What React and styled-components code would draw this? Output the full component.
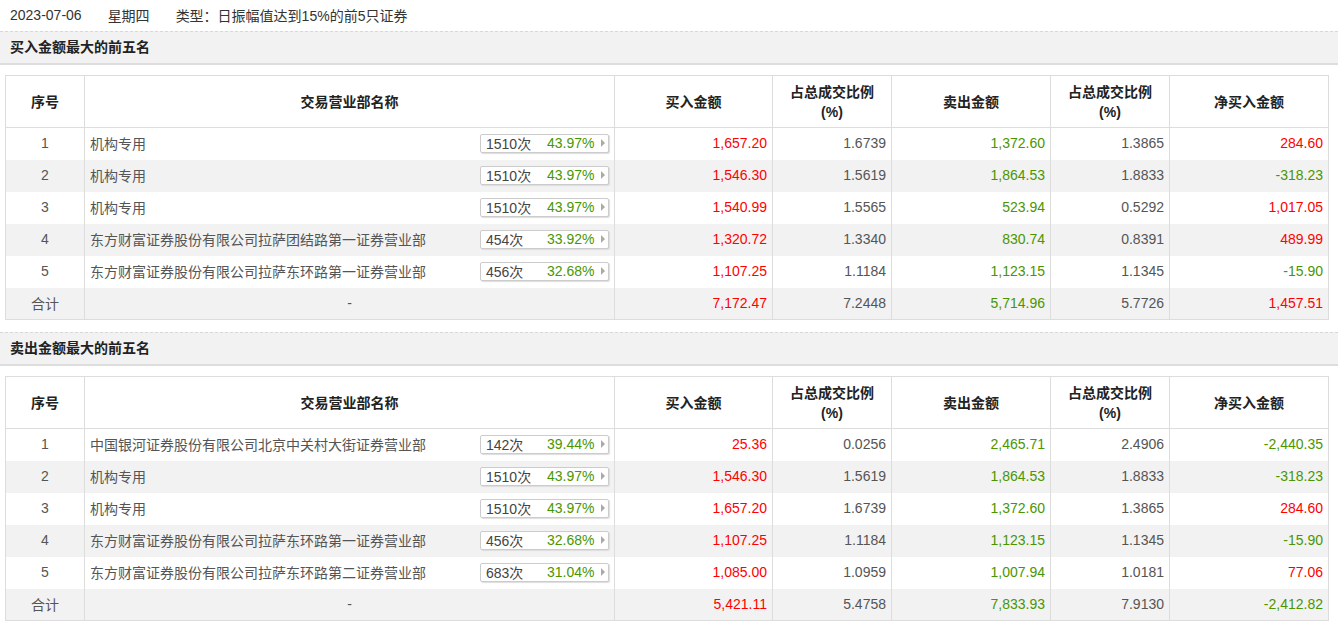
import React from 'react';
import styled, { createGlobalStyle } from 'styled-components';

const GlobalStyle = createGlobalStyle`
  body {
    margin: 0;
    background: #ffffff;
    font-family: 'Liberation Sans', Arial, 'Noto Sans CJK SC', sans-serif;
    font-size: 14px;
    color: #333;
  }
`;

const Page = styled.div`
  width: 1338px;
`;

const InfoBar = styled.div`
  display: flex;
  height: 31px;
  align-items: center;
  padding: 0 0 2px 10px;
  box-sizing: border-box;
  gap: 26px;
  color: #333;
`;

const SectionBar = styled.div`
  height: 31px;
  line-height: 31px;
  background: #f2f2f2;
  border-top: 1px dashed #d8d8d8;
  border-bottom: 2px solid #dddddd;
  padding-left: 10px;
  font-weight: bold;
  color: #222;
`;

const Table = styled.table`
  border-collapse: collapse;
  table-layout: fixed;
  width: 1323px;
  margin: 10px 0 12px 5px;
`;

const Th = styled.th`
  height: 51px;
  padding: 0;
  border: 1px solid #dddddd;
  font-weight: bold;
  color: #222;
  line-height: 20px;
  text-align: center;
`;

const Tr = styled.tr`
  background: ${(p) => (p.$alt ? '#f2f2f2' : '#ffffff')};
`;

const Td = styled.td`
  height: ${(p) => (p.$last ? '29px' : '30px')};
  border-left: 1px solid #dddddd;
  border-right: 1px solid #dddddd;
  border-bottom: ${(p) => (p.$last ? '1px solid #dddddd' : 'none')};
  text-align: ${(p) => p.$align || 'right'};
  padding: 0 5px 2px;
  color: ${(p) => p.$color || '#555'};
  white-space: nowrap;
`;

const NameWrap = styled.div`
  display: flex;
  align-items: center;
  justify-content: space-between;
`;

const Badge = styled.span`
  display: inline-flex;
  align-items: center;
  width: 122px;
  height: 17px;
  border: 1px solid #cccccc;
  border-radius: 2px;
  box-shadow: 1px 1px 1px #dddddd;
  background: #fff;
  padding-left: 5px;
  box-sizing: content-box;
`;

const Count = styled.span`
  width: 61px;
  color: #444;
`;

const Pct = styled.span`
  width: 54px;
  color: #4a9600;
`;

const Arrow = styled.span`
  width: 0;
  height: 0;
  border-top: 4px solid transparent;
  border-bottom: 4px solid transparent;
  border-left: 4px solid #aaaaaa;
`;

const RED = '#ff0000';
const GREEN = '#4a9600';

const netColor = (v) => (v.startsWith('-') ? GREEN : RED);

const buyRows = [
  ['1', '机构专用', '1510次', '43.97%', '1,657.20', '1.6739', '1,372.60', '1.3865', '284.60'],
  ['2', '机构专用', '1510次', '43.97%', '1,546.30', '1.5619', '1,864.53', '1.8833', '-318.23'],
  ['3', '机构专用', '1510次', '43.97%', '1,540.99', '1.5565', '523.94', '0.5292', '1,017.05'],
  ['4', '东方财富证券股份有限公司拉萨团结路第一证券营业部', '454次', '33.92%', '1,320.72', '1.3340', '830.74', '0.8391', '489.99'],
  ['5', '东方财富证券股份有限公司拉萨东环路第一证券营业部', '456次', '32.68%', '1,107.25', '1.1184', '1,123.15', '1.1345', '-15.90'],
];
const buyTotal = ['7,172.47', '7.2448', '5,714.96', '5.7726', '1,457.51'];

const sellRows = [
  ['1', '中国银河证券股份有限公司北京中关村大街证券营业部', '142次', '39.44%', '25.36', '0.0256', '2,465.71', '2.4906', '-2,440.35'],
  ['2', '机构专用', '1510次', '43.97%', '1,546.30', '1.5619', '1,864.53', '1.8833', '-318.23'],
  ['3', '机构专用', '1510次', '43.97%', '1,657.20', '1.6739', '1,372.60', '1.3865', '284.60'],
  ['4', '东方财富证券股份有限公司拉萨东环路第一证券营业部', '456次', '32.68%', '1,107.25', '1.1184', '1,123.15', '1.1345', '-15.90'],
  ['5', '东方财富证券股份有限公司拉萨东环路第二证券营业部', '683次', '31.04%', '1,085.00', '1.0959', '1,007.94', '1.0181', '77.06'],
];
const sellTotal = ['5,421.11', '5.4758', '7,833.93', '7.9130', '-2,412.82'];

const RankTable = ({ rows, total }) => (
  <Table>
    <colgroup>
      <col style={{ width: 79 }} />
      <col style={{ width: 530 }} />
      <col style={{ width: 158 }} />
      <col style={{ width: 119 }} />
      <col style={{ width: 159 }} />
      <col style={{ width: 119 }} />
      <col style={{ width: 159 }} />
    </colgroup>
    <thead>
      <tr>
        <Th>序号</Th>
        <Th>交易营业部名称</Th>
        <Th>买入金额</Th>
        <Th>占总成交比例<br />(%)</Th>
        <Th>卖出金额</Th>
        <Th>占总成交比例<br />(%)</Th>
        <Th>净买入金额</Th>
      </tr>
    </thead>
    <tbody>
      {rows.map((r, i) => (
        <Tr key={r[0]} $alt={i % 2 === 1}>
          <Td $align="center">{r[0]}</Td>
          <Td $align="left">
            <NameWrap>
              <span>{r[1]}</span>
              <Badge>
                <Count>{r[2]}</Count>
                <Pct>{r[3]}</Pct>
                <Arrow />
              </Badge>
            </NameWrap>
          </Td>
          <Td $color={RED}>{r[4]}</Td>
          <Td>{r[5]}</Td>
          <Td $color={GREEN}>{r[6]}</Td>
          <Td>{r[7]}</Td>
          <Td $color={netColor(r[8])}>{r[8]}</Td>
        </Tr>
      ))}
      <Tr $alt>
        <Td $align="center" $last>合计</Td>
        <Td $align="center" $last>-</Td>
        <Td $color={RED} $last>{total[0]}</Td>
        <Td $last>{total[1]}</Td>
        <Td $color={GREEN} $last>{total[2]}</Td>
        <Td $last>{total[3]}</Td>
        <Td $color={netColor(total[4])} $last>{total[4]}</Td>
      </Tr>
    </tbody>
  </Table>
);

const App = () => (
  <Page>
    <GlobalStyle />
    <InfoBar>
      <span>2023-07-06</span>
      <span>星期四</span>
      <span>类型：日振幅值达到15%的前5只证券</span>
    </InfoBar>
    <SectionBar>买入金额最大的前五名</SectionBar>
    <RankTable rows={buyRows} total={buyTotal} />
    <SectionBar>卖出金额最大的前五名</SectionBar>
    <RankTable rows={sellRows} total={sellTotal} />
  </Page>
);

export default App;
